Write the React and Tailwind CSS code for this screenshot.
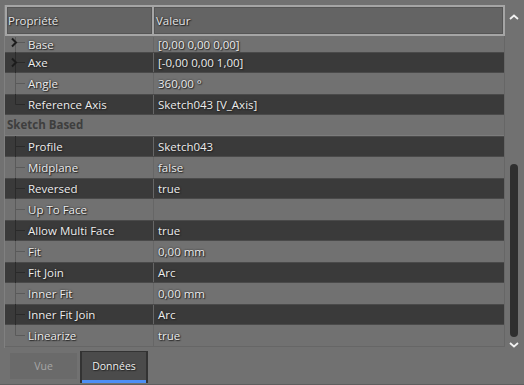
import React from 'react';

const shadow = '[text-shadow:0_0_2px_#1a1a1a,1px_1px_1px_#2a2a2a]';

const topRows = [
    { name: 'Base', value: '[0,00 0,00 0,00]', arrow: true, h: 16 },
    { name: 'Axe', value: '[-0,00 0,00 1,00]', arrow: true },
    { name: 'Angle', value: '360,00 °' },
    { name: 'Reference Axis', value: 'Sketch043 [V_Axis]', last: true },
];

const sketchRows = [
    { name: 'Profile', value: 'Sketch043' },
    { name: 'Midplane', value: 'false' },
    { name: 'Reversed', value: 'true' },
    { name: 'Up To Face', value: '' },
    { name: 'Allow Multi Face', value: 'true' },
    { name: 'Fit', value: '0,00 mm' },
    { name: 'Fit Join', value: 'Arc' },
    { name: 'Inner Fit', value: '0,00 mm' },
    { name: 'Inner Fit Join', value: 'Arc' },
    { name: 'Linearize', value: 'true', last: true },
];

const TreeLines = ({ last, arrow, dark, h = 21 }) => {
    const c = dark ? '#2a2a2a' : '#5a5a5a';
    const mid = h - 10.5;
    return (
        <svg width="20" height={h} className="shrink-0">
            <line x1="10.5" y1="0" x2="10.5" y2={last ? mid : h} stroke={c} strokeWidth="1" />
            <line x1="10.5" y1={mid} x2="20" y2={mid} stroke={c} strokeWidth="1" />
            {arrow && (
                <path d={`M7 ${mid - 4} L11 ${mid} L7 ${mid + 4}`} fill="none" stroke="#1c1c1c" strokeWidth="2" />
            )}
        </svg>
    );
};

const Row = ({ row, dark }) => (
    <div
        className={`flex items-center ${
            row.h ? 'h-[16px] pt-[1px]' : 'h-[21px]'
        } ${dark ? 'bg-[#3a3a3a] border-y border-[#4a4a4a]' : 'bg-[#717171]'}`}
    >
        <div className="flex h-full w-[149px] shrink-0 items-center border-r border-[#666666]">
            <TreeLines last={row.last} arrow={row.arrow} dark={dark} h={row.h || 21} />
            <span className={`pl-[3px] text-[#ededed] ${shadow}`}>{row.name}</span>
        </div>
        <span className={`pl-[4px] text-[#ededed] ${shadow}`}>{row.value}</span>
    </div>
);

const App = () => {
    return (
        <div
            className="flex h-[385px] w-[524px] flex-col overflow-hidden bg-[#717171] text-[11.5px] leading-none"
            style={{ fontFamily: '"Open Sans", "Noto Sans", sans-serif' }}
        >
            <div className="flex pt-[5px]">
                <div className="ml-[4px] flex w-[501px] flex-col border-l border-[#808080]">
                    <div className="flex h-[31px]">
                        <div className="flex w-[149px] items-center border-2 border-[#a5a5a5] bg-[#646464] pl-[1px] [box-shadow:inset_0_0_0_1px_#555]">
                            <span className={`text-[#e6e6e6] ${shadow}`}>Propriété</span>
                        </div>
                        <div className="flex flex-1 items-center border-2 border-l-0 border-[#a5a5a5] bg-[#646464] pl-[2px] [box-shadow:inset_0_0_0_1px_#555]">
                            <span className={`text-[#e6e6e6] ${shadow}`}>Valeur</span>
                        </div>
                    </div>
                    <div className="h-[311px] overflow-hidden border-r border-b border-[#666666]">
                        {topRows.map((r, k) => (
                            <Row key={r.name} row={r} dark={k % 2 === 1} />
                        ))}
                        <div className="flex h-[21px] items-center border-b border-[#7c7c7c] bg-[#717171] pl-[2px]">
                            <span className="font-bold text-[#3e3e3e]">Sketch Based</span>
                        </div>
                        {sketchRows.map((r, k) => (
                            <Row key={r.name} row={r} dark={k % 2 === 0} />
                        ))}
                    </div>
                </div>
                <div className="flex w-[17px] flex-col items-center pl-[1px]">
                    <svg width="10" height="6" className="mt-[9px]">
                        <path d="M1 5 L5 1.5 L9 5" fill="none" stroke="#f2f2f2" strokeWidth="1.8" />
                    </svg>
                    <div className="mt-[144px] h-[173px] w-[8px] rounded-full bg-[#2f2f2f]" />
                    <svg width="10" height="6" className="mt-[5px]">
                        <path d="M1 1 L5 4.5 L9 1" fill="none" stroke="#f2f2f2" strokeWidth="1.8" />
                    </svg>
                </div>
            </div>
            <div className="flex flex-1 items-start pt-[3px]">
                <div className="ml-[10px] mt-[2px] flex h-[26px] w-[67px] items-center justify-center bg-[#6a6a6a]">
                    <span className="text-[10.5px] text-[#a6a6a6]">Vue</span>
                </div>
                <div className="ml-[3px] flex h-[32px] w-[68px] flex-col border-x-2 border-t border-[#333333] bg-[#4b4b4b]">
                    <div className="flex flex-1 items-center justify-center">
                        <span className={`text-[10.5px] text-[#f0f0f0] ${shadow}`}>Données</span>
                    </div>
                    <div className="h-[3px] bg-[#4d8ff5]" />
                </div>
            </div>
            <div className="h-[1px] bg-[#5e5e5e]" />
        </div>
    );
};

export default App;
